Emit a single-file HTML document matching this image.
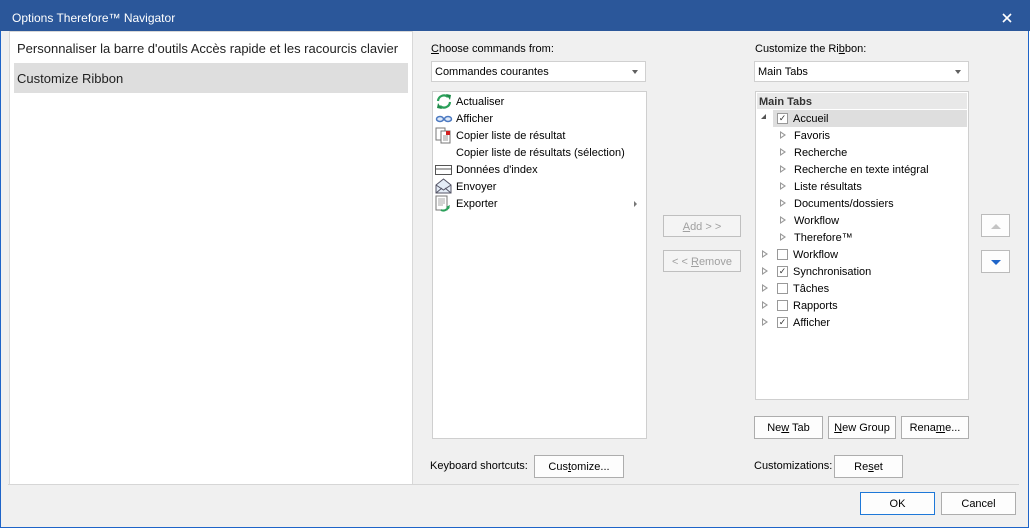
<!DOCTYPE html>
<html><head><meta charset="utf-8"><style>
*{margin:0;padding:0;box-sizing:border-box}
body{width:1030px;height:529px;overflow:hidden;background:#fff;font-family:"Liberation Sans",sans-serif;font-size:11px;color:#000;position:relative}
.a{position:absolute;white-space:nowrap}
span.a{margin-top:1px}
.win{position:absolute;left:0;top:0;width:1029px;height:528px;background:#f0f0f0;border:1px solid #1e64c8;border-top:none}
.title{position:absolute;left:0;top:0;width:1030px;height:31px;background:#2b579a;color:#fff;font-size:12px}
.btn{position:absolute;background:#fdfdfd;border:1px solid #adadad;text-align:center;line-height:22px;font-size:11px}
.dis{color:#a0a0a0;border-color:#bfbfbf;background:#f4f4f4}
.box{position:absolute;background:#fff;border:1px solid #d5d5d5}
.combo{position:absolute;background:#fff;border:1px solid #d0d0d0;height:21px;line-height:20px;padding-left:3px}
.combo:after{content:"";position:absolute;right:7px;top:8px;border-left:3px solid transparent;border-right:3px solid transparent;border-top:4px solid #606060}
u{text-decoration:underline}
.tri{position:absolute;width:0;height:0;border-top:4px solid transparent;border-bottom:4px solid transparent;border-left:6px solid #999}
.tri:after{content:"";position:absolute;left:-5px;top:-2px;border-top:2px solid transparent;border-bottom:2px solid transparent;border-left:3px solid #fff}
.cb{position:absolute;width:11px;height:11px;border:1px solid #999;background:#fff;font-size:9px;line-height:9px;text-align:center;color:#333}
</style></head><body>
<div class="win"></div>
<div class="title"><span class="a" style="left:12px;top:10px">Options Therefore™ Navigator</span>
<svg class="a" style="left:1002px;top:13px" width="10" height="10"><path d="M1 1L9 9M9 1L1 9" stroke="#fff" stroke-width="1.6"/></svg></div>

<div class="box" style="left:9px;top:31px;width:404px;height:454px;border-color:#d8d8d8"></div>
<span class="a" style="left:17px;top:40px;font-size:13px;color:#222">Personnaliser la barre d'outils Accès rapide et les racourcis clavier</span>
<div class="a" style="left:14px;top:63px;width:394px;height:30px;background:#dedede"></div>
<span class="a" style="left:17px;top:70px;font-size:13px;color:#222">Customize Ribbon</span>

<span class="a" style="left:431px;top:42px"><u>C</u>hoose commands from:</span>
<div class="combo" style="left:431px;top:61px;width:215px">Commandes courantes</div>
<div class="box" style="left:432px;top:91px;width:215px;height:348px;border-color:#cfcfcf"></div>
<svg class="a" style="left:435px;top:93px" width="18" height="17"><path d="M3 8a6 6 0 0 1 10-4" stroke="#2aa05a" stroke-width="2.2" fill="none"/><path d="M15 9a6 6 0 0 1-10 4" stroke="#2aa05a" stroke-width="2.2" fill="none"/><path d="M11 1l5 1-1 5z M7 16l-5-1 1-5z" fill="#1f8a4a"/></svg>
<span class="a" style="left:456px;top:95px">Actualiser</span>
<svg class="a" style="left:435px;top:112px" width="18" height="12"><ellipse cx="5" cy="7" rx="3.5" ry="2.5" stroke="#4a78c0" stroke-width="1.5" fill="#dde8f8"/><ellipse cx="13" cy="7" rx="3.5" ry="2.5" stroke="#4a78c0" stroke-width="1.5" fill="#dde8f8"/></svg>
<span class="a" style="left:456px;top:112px">Afficher</span>
<svg class="a" style="left:435px;top:127px" width="18" height="17"><rect x="1" y="1" width="9" height="12" fill="#fff" stroke="#777"/><rect x="6" y="4" width="9" height="12" fill="#fff" stroke="#777"/><rect x="11" y="4" width="4" height="4" fill="#d02020"/><path d="M8 9h5M8 11h5M8 13h5" stroke="#999"/></svg>
<span class="a" style="left:456px;top:129px">Copier liste de résultat</span>
<span class="a" style="left:456px;top:146px">Copier liste de résultats (sélection)</span>
<svg class="a" style="left:435px;top:164px" width="18" height="12"><rect x="0.5" y="1.5" width="16" height="9" fill="#fff" stroke="#555"/><path d="M1 5h15" stroke="#555"/></svg>
<span class="a" style="left:456px;top:163px">Données d'index</span>
<svg class="a" style="left:435px;top:178px" width="18" height="17"><path d="M1 7L8.5 1 16 7v8H1z" fill="#e4ecf6" stroke="#556"/><path d="M1 7l7.5 5 7.5-5M1 15l6-5M16 15l-6-5" stroke="#556" fill="none"/></svg>
<span class="a" style="left:456px;top:180px">Envoyer</span>
<svg class="a" style="left:435px;top:195px" width="18" height="18"><rect x="1" y="1" width="11" height="14" fill="#fff" stroke="#777"/><path d="M3 4h7M3 6h7M3 8h7M3 10h5" stroke="#aaa"/><path d="M6 15q4 2 8-3" stroke="#2aa05a" stroke-width="2" fill="none"/><path d="M15 10l-1 4-3-2z" fill="#2aa05a"/></svg>
<span class="a" style="left:456px;top:197px">Exporter</span>
<div class="a" style="left:634px;top:201px;border-top:3px solid transparent;border-bottom:3px solid transparent;border-left:3px solid #777"></div>

<div class="btn dis" style="left:663px;top:215px;width:78px;height:22px"><u>A</u>dd &gt; &gt;</div>
<div class="btn dis" style="left:663px;top:250px;width:78px;height:22px">&lt; &lt; <u>R</u>emove</div>

<span class="a" style="left:755px;top:42px">Customize the Ri<u>b</u>bon:</span>
<div class="combo" style="left:754px;top:61px;width:215px">Main Tabs</div>
<div class="box" style="left:755px;top:91px;width:214px;height:309px;border-color:#cfcfcf"></div>
<div class="a" style="left:757px;top:93px;width:210px;height:16px;background:#e8e8e8"></div>
<span class="a" style="left:759px;top:95px;font-weight:bold;color:#333">Main Tabs</span>
<div class="a" style="left:773px;top:110px;width:194px;height:17px;background:#dedede"></div>
<div class="a" style="left:761px;top:114px;border-left:5px solid transparent;border-bottom:5px solid #555"></div>
<div class="cb" style="left:777px;top:113px">✓</div><span class="a" style="left:793px;top:112px">Accueil</span>
<div class="tri" style="left:780px;top:131px"></div><span class="a" style="left:794px;top:129px">Favoris</span>
<div class="tri" style="left:780px;top:148px"></div><span class="a" style="left:794px;top:146px">Recherche</span>
<div class="tri" style="left:780px;top:165px"></div><span class="a" style="left:794px;top:163px">Recherche en texte intégral</span>
<div class="tri" style="left:780px;top:182px"></div><span class="a" style="left:794px;top:180px">Liste résultats</span>
<div class="tri" style="left:780px;top:199px"></div><span class="a" style="left:794px;top:197px">Documents/dossiers</span>
<div class="tri" style="left:780px;top:216px"></div><span class="a" style="left:794px;top:214px">Workflow</span>
<div class="tri" style="left:780px;top:233px"></div><span class="a" style="left:794px;top:231px">Therefore™</span>
<div class="tri" style="left:762px;top:250px"></div><div class="cb" style="left:777px;top:249px"></div><span class="a" style="left:793px;top:248px">Workflow</span>
<div class="tri" style="left:762px;top:267px"></div><div class="cb" style="left:777px;top:266px">✓</div><span class="a" style="left:793px;top:265px">Synchronisation</span>
<div class="tri" style="left:762px;top:284px"></div><div class="cb" style="left:777px;top:283px"></div><span class="a" style="left:793px;top:282px">Tâches</span>
<div class="tri" style="left:762px;top:301px"></div><div class="cb" style="left:777px;top:300px"></div><span class="a" style="left:793px;top:299px">Rapports</span>
<div class="tri" style="left:762px;top:318px"></div><div class="cb" style="left:777px;top:317px">✓</div><span class="a" style="left:793px;top:316px">Afficher</span>

<div class="btn" style="left:981px;top:214px;width:29px;height:23px;border-color:#bbb"></div>
<div class="a" style="left:991px;top:224px;border-left:5px solid transparent;border-right:5px solid transparent;border-bottom:5px solid #c4c4c4"></div>
<div class="btn" style="left:981px;top:250px;width:29px;height:23px;border-color:#bbb"></div>
<div class="a" style="left:991px;top:260px;border-left:5px solid transparent;border-right:5px solid transparent;border-top:5px solid #1e64c8"></div>

<div class="btn" style="left:754px;top:416px;width:69px;height:23px">Ne<u>w</u> Tab</div>
<div class="btn" style="left:828px;top:416px;width:68px;height:23px"><u>N</u>ew Group</div>
<div class="btn" style="left:901px;top:416px;width:68px;height:23px">Rena<u>m</u>e...</div>

<span class="a" style="left:430px;top:459px">Keyboard shortcuts:</span>
<div class="btn" style="left:534px;top:455px;width:90px;height:23px">Cus<u>t</u>omize...</div>
<span class="a" style="left:754px;top:459px">Customizations:</span>
<div class="btn" style="left:834px;top:455px;width:69px;height:23px">Re<u>s</u>et</div>

<div class="a" style="left:8px;top:484px;width:1011px;height:1px;background:#d6d6d6"></div>
<div class="btn" style="left:860px;top:492px;width:75px;height:23px;border-color:#1e78d8">OK</div>
<div class="btn" style="left:941px;top:492px;width:75px;height:23px">Cancel</div>
</body></html>
